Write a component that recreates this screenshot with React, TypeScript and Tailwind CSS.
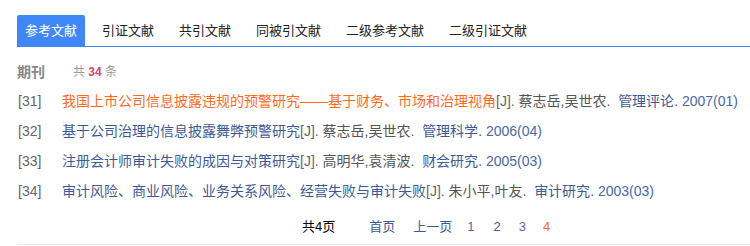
import React from "react";

const tabs = ["参考文献", "引证文献", "共引文献", "同被引文献", "二级参考文献", "二级引证文献"];

const rows = [
  {
    n: "[31]",
    title: "我国上市公司信息披露违规的预警研究——基于财务、市场和治理视角",
    hl: true,
    authors: "蔡志岳,吴世农",
    journal: "管理评论",
    year: "2007(01)",
  },
  { n: "[32]", title: "基于公司治理的信息披露舞弊预警研究", hl: false, authors: "蔡志岳,吴世农", journal: "管理科学", year: "2006(04)" },
  { n: "[33]", title: "注册会计师审计失败的成因与对策研究", hl: false, authors: "高明华,袁清波", journal: "财会研究", year: "2005(03)" },
  {
    n: "[34]",
    title: "审计风险、商业风险、业务关系风险、经营失败与审计失败",
    hl: false,
    authors: "朱小平,叶友",
    journal: "审计研究",
    year: "2003(03)",
  },
];

export default function App() {
  return (
    <div
      className="w-[750px] h-[246px] bg-white overflow-hidden pl-[17px] pt-[15px]"
      style={{ fontFamily: '"Liberation Sans", Arial, "Noto Sans CJK SC", sans-serif' }}
    >
      <div className="flex border-b border-[#3d85f5] h-[32px]">
        {tabs.map((t, i) => (
          <div
            key={t}
            className={
              i === 0
                ? "h-[31px] px-[8px] mr-[9px] flex items-center text-[13px] text-white bg-[#3f87f6] rounded-t-[2px]"
                : "h-[31px] px-[8px] mr-[9px] flex items-center text-[13px] text-[#222]"
            }
          >
            {t}
          </div>
        ))}
      </div>

      <div className="mt-[15px] h-[20px] flex items-center">
        <span className="text-[14px] font-bold text-[#888] w-[56px]">期刊</span>
        <span className="text-[12px] text-[#999]">
          共 <span className="font-bold text-[#d0486e]">34</span> 条
        </span>
      </div>

      <div className="mt-[4px]">
        {rows.map((r) => (
          <div key={r.n} className="flex items-center h-[30px] text-[14px] whitespace-nowrap">
            <span className="w-[45px] pl-[1px] text-[#666]">{r.n}</span>
            <span className={r.hl ? "text-[#ff6a1f]" : "text-[#3e5a96]"}>{r.title}</span>
            <span className="text-[#666]">[J].&nbsp;</span>
            <span className="text-[#555]">{r.authors}.&nbsp;&nbsp;</span>
            <span className="text-[#3e5a96]">{r.journal}.&nbsp;</span>
            <span className="text-[#4a68a8]">{r.year}</span>
          </div>
        ))}
      </div>

      <div className="mt-[6px] h-[30px] flex items-center text-[13px] pl-[285px]">
        <span className="text-black">共4页</span>
        <span className="ml-[34px] text-[#3e5a96]">首页</span>
        <span className="ml-[18px] text-[#3e5a96]">上一页</span>
        <span className="ml-[15px] text-[#6e5c9c]">1</span>
        <span className="ml-[19px] text-[#3e5a96]">2</span>
        <span className="ml-[18px] text-[#6e5c9c]">3</span>
        <span className="ml-[17px] text-[#ff6a1f]">4</span>
      </div>
      <div className="mt-[2px] border-t border-[#e8e8e8]" />
    </div>
  );
}
